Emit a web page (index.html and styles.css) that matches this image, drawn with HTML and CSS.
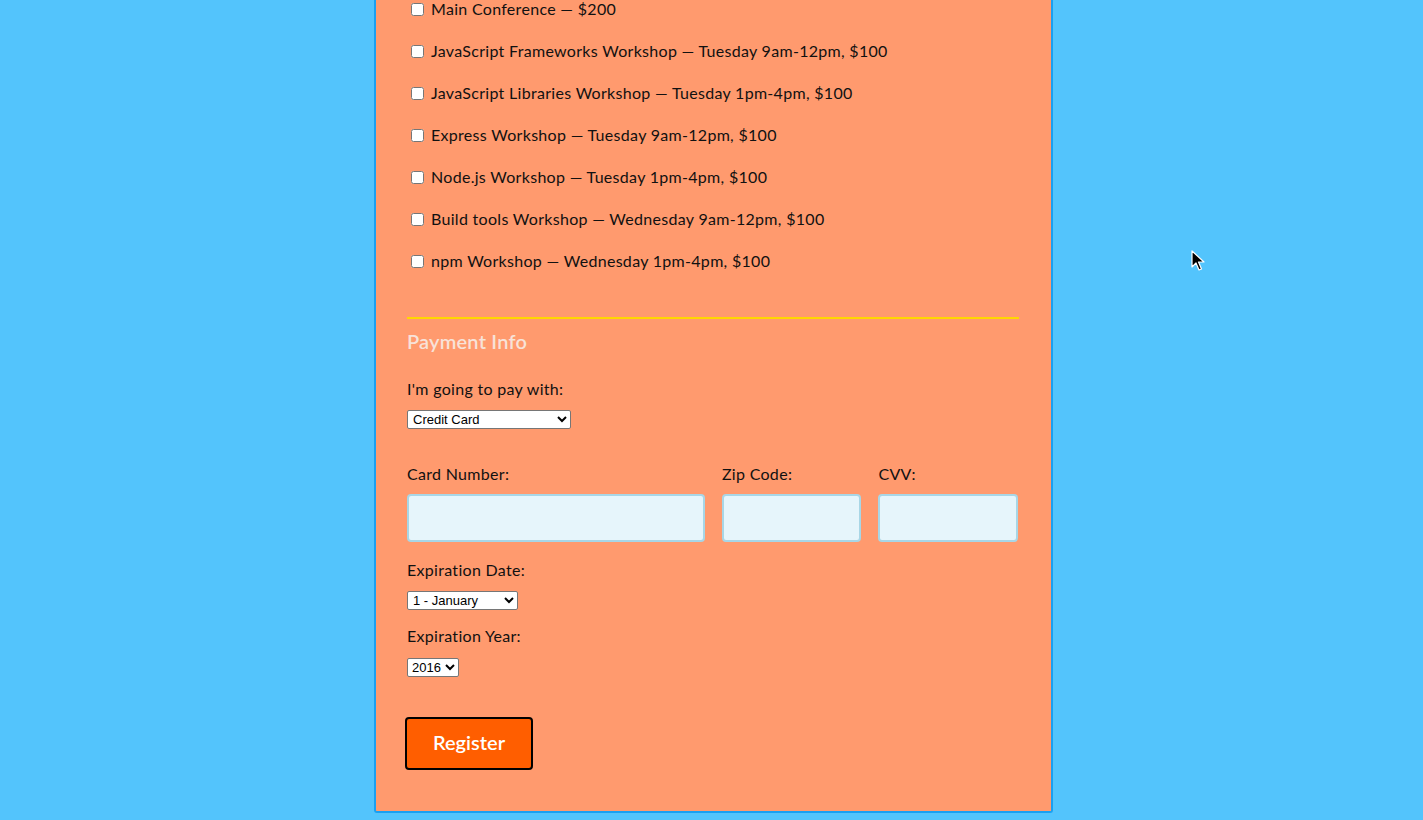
FILE: index.html
```html
<!DOCTYPE html>
<html>
<head>
<meta charset="utf-8">
<link rel="stylesheet" href="styles.css">
</head>
<body>
<div class="page">
  <form class="container">
    <fieldset class="activities">
      <label class="act"><input type="checkbox"> Main Conference — $200</label>
      <label class="act"><input type="checkbox"> JavaScript Frameworks Workshop — Tuesday 9am-12pm, $100</label>
      <label class="act"><input type="checkbox"> JavaScript Libraries Workshop — Tuesday 1pm-4pm, $100</label>
      <label class="act"><input type="checkbox"> Express Workshop — Tuesday 9am-12pm, $100</label>
      <label class="act"><input type="checkbox"> Node.js Workshop — Tuesday 1pm-4pm, $100</label>
      <label class="act"><input type="checkbox"> Build tools Workshop — Wednesday 9am-12pm, $100</label>
      <label class="act"><input type="checkbox"> npm Workshop — Wednesday 1pm-4pm, $100</label>
    </fieldset>
    <fieldset class="payment">
      <h2 class="legend">Payment Info</h2>
      <label class="lbl lbl-pay" for="pay">I'm going to pay with:</label>
      <select id="pay" class="sel sel-pay">
        <option>Credit Card</option>
        <option>PayPal</option>
        <option>Bitcoin</option>
      </select>
      <div class="card-row">
        <div class="field field-cc">
          <label class="lbl" for="cc">Card Number:</label>
          <input id="cc" class="txt" type="text">
        </div>
        <div class="field field-sm">
          <label class="lbl" for="zip">Zip Code:</label>
          <input id="zip" class="txt" type="text">
        </div>
        <div class="field field-sm">
          <label class="lbl" for="cvv">CVV:</label>
          <input id="cvv" class="txt" type="text">
        </div>
      </div>
      <label class="lbl lbl-exp" for="month">Expiration Date:</label>
      <select id="month" class="sel sel-month">
        <option>1 - January</option>
      </select>
      <label class="lbl lbl-year" for="year">Expiration Year:</label>
      <select id="year" class="sel sel-year">
        <option>2016</option>
      </select>
    </fieldset>
    <button type="button" class="register">Register</button>
  </form>
  <svg class="cursor" width="14" height="22" viewBox="0 0 14 22"><path d="M1 1 L1 17 L5 13 L8 20 L10.5 19 L7.5 12 L13 12 Z" fill="#000" stroke="#fff" stroke-width="1.2" stroke-linejoin="round"/></svg>
</div>
</body>
</html>
```

FILE: styles.css
```css
html, body {
  margin: 0;
  padding: 0;
  background: #53c4fc;
  height: 820px;
  overflow: hidden;
}
.page {
  position: relative;
  width: 1423px;
  height: 820px;
}
.container {
  box-sizing: border-box;
  width: 679px;
  margin: -1px 0 0 374px;
  background: #ff9a6e;
  border: 2px solid #1aa0f2;
  border-top: 0;
  border-radius: 0 0 3px 3px;
  padding: 0 32px 41px 31px;
  font-family: Lato, "Noto Sans", sans-serif;
  font-size: 16px;
  color: #111;
}
fieldset {
  border: 0;
  margin: 0;
  padding: 0;
}
.activities {
  display: flex;
  flex-direction: column;
  gap: 22px;
  padding-top: 0;
  padding-bottom: 46px;
  border-bottom: 2px solid #ffd700;
}
.act {
  display: flex;
  align-items: center;
  height: 20px;
  line-height: 20px;
  letter-spacing: 0.3px;
}
.act input {
  margin: 0 7px 0 4px;
  width: 13px;
  height: 13px;
}
.payment {
  display: flex;
  flex-direction: column;
  align-items: flex-start;
}
.legend {
  margin: 10px 0 0 0;
  font-size: 20px;
  font-weight: 600;
  color: #f8e2d8;
  line-height: 24px;
  letter-spacing: 0.2px;
}
.lbl {
  display: block;
  line-height: 20px;
  letter-spacing: 0.3px;
}
.lbl-pay {
  margin-top: 26px;
}
.sel {
  box-sizing: border-box;
  font-family: "Liberation Sans", Arial, sans-serif;
  font-size: 13px;
  height: 19px;
  margin-top: 11px;
  background: #fff;
  border: 1px solid #767676;
  border-radius: 2px;
  padding: 0 0 0 1px;
  color: #000;
}
.sel-pay { width: 164px; }
.sel-month { width: 111px; }
.sel-year { width: 52px; padding: 0; margin-top: 12px; }
.card-row {
  display: flex;
  gap: 17px;
  width: 611px;
  margin-top: 35px;
}
.field {
  display: flex;
  flex-direction: column;
  gap: 10px;
}
.field-cc { width: 299px; }
.field-sm { width: 140px; }
.txt {
  box-sizing: border-box;
  width: 100%;
  height: 48px;
  background: #e6f5fb;
  border: 2px solid #a8d6e6;
  border-radius: 4px;
  margin: 0;
}
.lbl-exp { margin-top: 18px; }
.lbl-year { margin-top: 16px; }
.register {
  display: block;
  margin: 40px 0 0 -2px;
  width: 128px;
  height: 53px;
  padding: 0 0 4px 0;
  background: #ff5e00;
  border: 2px solid #000;
  border-radius: 4px;
  color: #fff;
  font-family: Lato, "Noto Sans", sans-serif;
  font-size: 20px;
  font-weight: 600;
}
.cursor {
  position: absolute;
  left: 1191px;
  top: 251px;
}
```
